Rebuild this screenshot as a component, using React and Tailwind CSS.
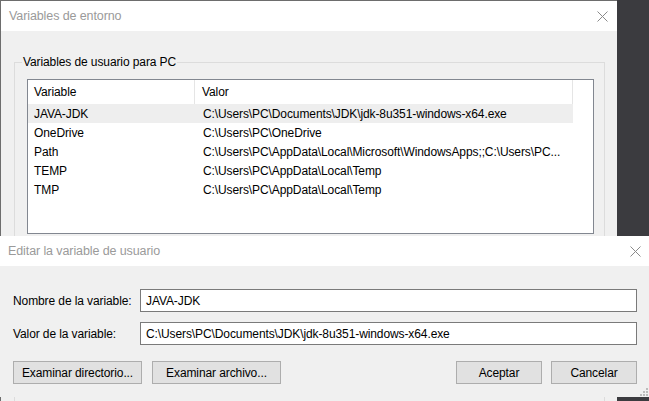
const font = { fontFamily: '"Liberation Sans", Arial, sans-serif' };

const rows = [
  ["JAVA-JDK", "C:\\Users\\PC\\Documents\\JDK\\jdk-8u351-windows-x64.exe", true],
  ["OneDrive", "C:\\Users\\PC\\OneDrive"],
  ["Path", "C:\\Users\\PC\\AppData\\Local\\Microsoft\\WindowsApps;;C:\\Users\\PC..."],
  ["TEMP", "C:\\Users\\PC\\AppData\\Local\\Temp"],
  ["TMP", "C:\\Users\\PC\\AppData\\Local\\Temp"],
];

function CloseX() {
  return (
    <svg width="11" height="11" viewBox="0 0 11 11">
      <path d="M0.5 0.5 L10.5 10.5 M10.5 0.5 L0.5 10.5" stroke="#8a8a8a" strokeWidth="1" fill="none" />
    </svg>
  );
}

function Btn({ w, children }) {
  return (
    <button className={`${w} h-[23px] bg-[#e1e1e1] border border-[#adadad] text-[12px] text-black flex items-center justify-center`}>
      {children}
    </button>
  );
}

function Grip() {
  return (
    <svg width="8" height="8" viewBox="0 0 8 8">
      {[[6, 0], [3, 3], [6, 3], [0, 6], [3, 6], [6, 6]].map(([x, y], i) => (
        <rect key={i} x={x} y={y} width="2" height="2" fill="#bcbcbc" />
      ))}
    </svg>
  );
}

export default function App() {
  return (
    <div className="relative w-[649px] h-[401px] overflow-hidden bg-[#3b3b3f] text-[12px] text-black tracking-[-0.1px]" style={font}>
      {/* ventana de atrás */}
      <div className="absolute left-0 top-0 w-[617px] h-[401px] bg-[#f0f0f0] border-l border-t border-[#6d6d6d]">
        <div className="h-[30px] bg-white flex items-center justify-between pl-[8px] pr-[9px]">
          <span className="text-[#9a9a9a] text-[12.5px]">Variables de entorno</span>
          <CloseX />
        </div>
        <div className="pt-[31px] pl-[13px]">
          <div className="relative w-[591px] h-[340px] border border-[#dcdcdc] pt-[16px] pl-[12px]">
            <span className="absolute -top-[8px] left-[7px] bg-[#f0f0f0] px-[1px] leading-[15px]">
              Variables de usuario para PC
            </span>
            <div className="w-[567px] h-[155px] bg-white border border-[#828790]">
              <div className="flex h-[24px]">
                <div className="w-[167px] border-r border-[#e5e5e5] pl-[6px] flex items-center">Variable</div>
                <div className="w-[378px] border-r border-[#e5e5e5] pl-[7px] flex items-center">Valor</div>
              </div>
              {rows.map(([n, v, sel]) => (
                <div key={n} className={`flex h-[19px] w-[545px] items-center ${sel ? "bg-[#eeeeee]" : ""}`}>
                  <div className="w-[168px] pl-[6px] whitespace-nowrap">{n}</div>
                  <div className="pl-[7px] whitespace-nowrap">{v}</div>
                </div>
              ))}
            </div>
          </div>
        </div>
      </div>

      {/* diálogo editar */}
      <div className="absolute left-0 top-[236px] w-[649px] h-[161px] bg-[#f0f0f0]">
        <div className="h-[30px] bg-white flex items-center justify-between pl-[8px] pr-[8px]">
          <span className="text-[#9a9a9a] text-[12.5px]">Editar la variable de usuario</span>
          <CloseX />
        </div>
        <div className="pt-[23px] px-[12px]">
          <div className="flex items-center h-[23px]">
            <span className="w-[128px] pl-[1px] whitespace-nowrap">Nombre de la variable:</span>
            <div className="w-[497px] h-[23px] bg-white border border-[#7a7a7a] flex items-center pl-[5px]">JAVA-JDK</div>
          </div>
          <div className="flex items-center h-[23px] mt-[10px]">
            <span className="w-[128px] pl-[1px] whitespace-nowrap">Valor de la variable:</span>
            <div className="w-[497px] h-[23px] bg-white border border-[#7a7a7a] flex items-center pl-[5px] whitespace-nowrap">
              C:\Users\PC\Documents\JDK\jdk-8u351-windows-x64.exe
            </div>
          </div>
          <div className="flex mt-[16px] pl-[1px]">
            <Btn w="w-[129px]">Examinar directorio...</Btn>
            <div className="ml-[10px]">
              <Btn w="w-[129px]">Examinar archivo...</Btn>
            </div>
            <div className="ml-auto flex gap-[9px]">
              <Btn w="w-[86px]">Aceptar</Btn>
              <Btn w="w-[86px]">Cancelar</Btn>
            </div>
          </div>
        </div>
        <div className="absolute right-[1px] bottom-[1px]">
          <Grip />
        </div>
      </div>
    </div>
  );
}
